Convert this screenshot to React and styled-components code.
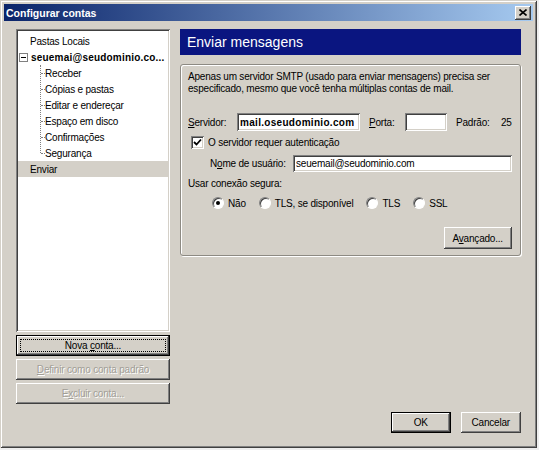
import React from "react";
import styled, { createGlobalStyle, css } from "styled-components";

const face = "#d4d0c8";

const GlobalStyle = createGlobalStyle`
  html, body {
    margin: 0;
    padding: 0;
    background: #eeeeee;
  }
  body {
    font-family: "Liberation Sans", Arial, sans-serif;
    font-size: 10px;
    letter-spacing: -0.2px;
    color: #000;
  }
  * {
    box-sizing: border-box;
  }
`;

const raised = css`
  background: ${face};
  box-shadow: inset -1px -1px #404040, inset 1px 1px #fff,
    inset -2px -2px #808080, inset 2px 2px ${face};
`;

const sunken = css`
  background: #fff;
  box-shadow: inset 1px 1px #808080, inset -1px -1px #fff,
    inset 2px 2px #404040, inset -2px -2px ${face};
`;

const Window = styled.div`
  width: 537px;
  height: 448px;
  padding: 4px;
  display: flex;
  flex-direction: column;
  background: ${face};
  box-shadow: inset 1px 1px ${face}, inset -1px -1px #404040,
    inset 2px 2px #fff, inset -2px -2px #808080;
`;

const TitleBar = styled.div`
  height: 17px;
  flex: none;
  display: flex;
  align-items: center;
  justify-content: space-between;
  padding: 0 2px;
  background: linear-gradient(to right, #0a246a, #a6caf0);
`;

const Title = styled.span`
  color: #fff;
  font-weight: bold;
  font-size: 10.5px;
  letter-spacing: 0;
`;

const CloseButton = styled.div`
  width: 16px;
  height: 14px;
  display: flex;
  align-items: center;
  justify-content: center;
  ${raised};
`;

const Body = styled.div`
  flex: 1;
  display: flex;
  gap: 10px;
  padding: 8px 13px 11px 12px;
`;

const LeftColumn = styled.div`
  width: 154px;
  flex: none;
  display: flex;
  flex-direction: column;
  gap: 3px;
`;

const Tree = styled.div`
  height: 303px;
  flex: none;
  padding: 4px 2px 2px;
  ${sunken};
`;

const TreeRow = styled.div`
  height: 16px;
  display: flex;
  align-items: center;
  padding-left: ${(p) => p.$indent}px;
  font-weight: ${(p) => (p.$bold ? "bold" : "normal")};
  letter-spacing: ${(p) => (p.$bold ? "0.2px" : "inherit")};
  background: ${(p) => (p.$selected ? face : "transparent")};
  white-space: nowrap;
  position: relative;
`;

const Expander = styled.span`
  width: 9px;
  height: 9px;
  margin: 0 3px 0 1px;
  border: 1px solid #808080;
  background: #fff;
  display: flex;
  align-items: center;
  justify-content: center;
  &::before {
    content: "";
    width: 5px;
    height: 1px;
    background: #000;
  }
`;

const Children = styled.div`
  position: relative;
  &::before {
    content: "";
    position: absolute;
    left: 22px;
    top: 0;
    bottom: 8px;
    border-left: 1px dotted #808080;
  }
`;

const ChildRow = styled(TreeRow)`
  &::before {
    content: "";
    position: absolute;
    left: 23px;
    top: 8px;
    width: 4px;
    border-top: 1px dotted #808080;
  }
`;

const Button = styled.button`
  font: inherit;
  letter-spacing: inherit;
  color: #000;
  height: ${(p) => p.$h || 21}px;
  width: ${(p) => p.$w || "100%"};
  padding: 0;
  margin: 0;
  position: relative;
  border: ${(p) => (p.$default ? "1px solid #000" : "none")};
  ${raised};
  &:disabled {
    color: #a19e97;
    text-shadow: 1px 1px #fff;
  }
  ${(p) =>
    p.$focus &&
    css`
      &::after {
        content: "";
        position: absolute;
        inset: 3px;
        border: 1px dotted #000;
      }
    `}
`;

const Key = styled.span`
  text-decoration: underline;
`;

const RightColumn = styled.div`
  flex: 1;
  display: flex;
  flex-direction: column;
`;

const PageHeader = styled.div`
  height: 26px;
  flex: none;
  display: flex;
  align-items: center;
  padding-left: 7px;
  background: #0a1580;
  color: #fff;
  font-size: 14px;
  letter-spacing: 0;
`;

const Group = styled.div`
  margin-top: 9px;
  border: 1px solid #8d8a83;
  border-radius: 3px;
  box-shadow: 1px 1px 0 #fff, inset 1px 1px 0 #fff;
  padding: 6px 8px 6px 7px;
  display: flex;
  flex-direction: column;
`;

const Description = styled.p`
  margin: 0;
  line-height: 12px;
`;

const FieldRow = styled.div`
  display: flex;
  align-items: center;
  margin-top: ${(p) => p.$gap}px;
  padding-left: ${(p) => p.$indent || 0}px;
  gap: ${(p) => p.$spacing || 0}px;
`;

const Label = styled.label`
  flex: none;
  width: ${(p) => (p.$w ? `${p.$w}px` : "auto")};
  margin-left: ${(p) => p.$ml || 0}px;
  white-space: nowrap;
`;

const TextBox = styled.input`
  font: inherit;
  letter-spacing: ${(p) => (p.$bold ? "0.3px" : "inherit")};
  font-weight: ${(p) => (p.$bold ? "bold" : "normal")};
  height: ${(p) => p.$h || 18}px;
  width: ${(p) => (p.$w ? `${p.$w}px` : "auto")};
  flex: ${(p) => (p.$w ? "none" : 1)};
  min-width: 0;
  border: none;
  outline: none;
  padding: 0 3px;
  ${sunken};
`;

const CheckBox = styled.span`
  width: 13px;
  height: 13px;
  margin-left: 3px;
  display: flex;
  align-items: center;
  justify-content: center;
  ${sunken};
`;

const Option = styled.span`
  display: flex;
  align-items: center;
  gap: 4px;
`;

const RadioDot = styled.span`
  width: 12px;
  height: 12px;
  border-radius: 50%;
  border: 1px solid;
  border-color: #808080 #fff #fff #808080;
  background: #fff;
  box-shadow: inset 1px 1px #404040;
  display: flex;
  align-items: center;
  justify-content: center;
  &::after {
    content: "";
    width: 4px;
    height: 4px;
    border-radius: 50%;
    background: ${(p) => (p.$on ? "#000" : "transparent")};
  }
`;

const GroupActions = styled.div`
  display: flex;
  justify-content: flex-end;
  margin-top: 18px;
`;

const Footer = styled.div`
  margin-top: auto;
  display: flex;
  justify-content: flex-end;
  gap: 10px;
`;

const children = [
  "Receber",
  "Cópias e pastas",
  "Editar e endereçar",
  "Espaço em disco",
  "Confirmações",
  "Segurança",
];

const radios = [
  { label: "Não", on: true },
  { label: "TLS, se disponível" },
  { label: "TLS" },
  { label: "SSL" },
];

export default function App() {
  return (
    <>
      <GlobalStyle />
      <Window>
        <TitleBar>
          <Title>Configurar contas</Title>
          <CloseButton>
            <svg width="8" height="7" viewBox="0 0 8 7">
              <path d="M0.5 0.5 L7.5 6.5 M7.5 0.5 L0.5 6.5" stroke="#000" strokeWidth="1.6" />
            </svg>
          </CloseButton>
        </TitleBar>
        <Body>
          <LeftColumn>
            <Tree>
              <TreeRow $indent={12}>Pastas Locais</TreeRow>
              <TreeRow $indent={0} $bold>
                <Expander />
                seuemai@seudominio.co...
              </TreeRow>
              <Children>
                {children.map((c) => (
                  <ChildRow key={c} $indent={27}>
                    {c}
                  </ChildRow>
                ))}
              </Children>
              <TreeRow $indent={12} $selected>
                Enviar
              </TreeRow>
            </Tree>
            <Button $default $focus>
              Nova <Key>c</Key>onta...
            </Button>
            <Button disabled>
              <Key>D</Key>efinir como conta padrão
            </Button>
            <Button disabled>
              E<Key>x</Key>cluir conta...
            </Button>
          </LeftColumn>
          <RightColumn>
            <PageHeader>Enviar mensagens</PageHeader>
            <Group>
              <Description>
                Apenas um servidor SMTP (usado para enviar mensagens) precisa ser
                especificado, mesmo que você tenha múltiplas contas de mail.
              </Description>
              <FieldRow $gap={18}>
                <Label $w={49}>
                  <Key>S</Key>ervidor:
                </Label>
                <TextBox $w={123} $bold readOnly value="mail.oseudominio.com" />
                <Label $w={36} $ml={9}>
                  <Key>P</Key>orta:
                </Label>
                <TextBox $w={42} readOnly value="" />
                <Label $w={45} $ml={9}>
                  Padrão:
                </Label>
                <Label>25</Label>
              </FieldRow>
              <FieldRow $gap={5} $spacing={4}>
                <CheckBox>
                  <svg width="9" height="9" viewBox="0 0 9 9">
                    <path d="M1 4 L3.5 6.5 L8 1.5" stroke="#000" strokeWidth="1.8" fill="none" />
                  </svg>
                </CheckBox>
                <Label>O servidor requer autenticação</Label>
              </FieldRow>
              <FieldRow $gap={6} $indent={22}>
                <Label $w={83}>
                  N<Key>o</Key>me de usuário:
                </Label>
                <TextBox $h={17} readOnly value="seuemail@seudominio.com" />
              </FieldRow>
              <FieldRow $gap={6}>
                <Label>Usar conexão segura:</Label>
              </FieldRow>
              <FieldRow $gap={8} $indent={24} $spacing={13}>
                {radios.map((r) => (
                  <Option key={r.label}>
                    <RadioDot $on={r.on} />
                    {r.label}
                  </Option>
                ))}
              </FieldRow>
              <GroupActions>
                <Button $w="68px" $h={22}>
                  A<Key>v</Key>ançado...
                </Button>
              </GroupActions>
            </Group>
            <Footer>
              <Button $default $w="60px">
                OK
              </Button>
              <Button $w="60px">Cancelar</Button>
            </Footer>
          </RightColumn>
        </Body>
      </Window>
    </>
  );
}
